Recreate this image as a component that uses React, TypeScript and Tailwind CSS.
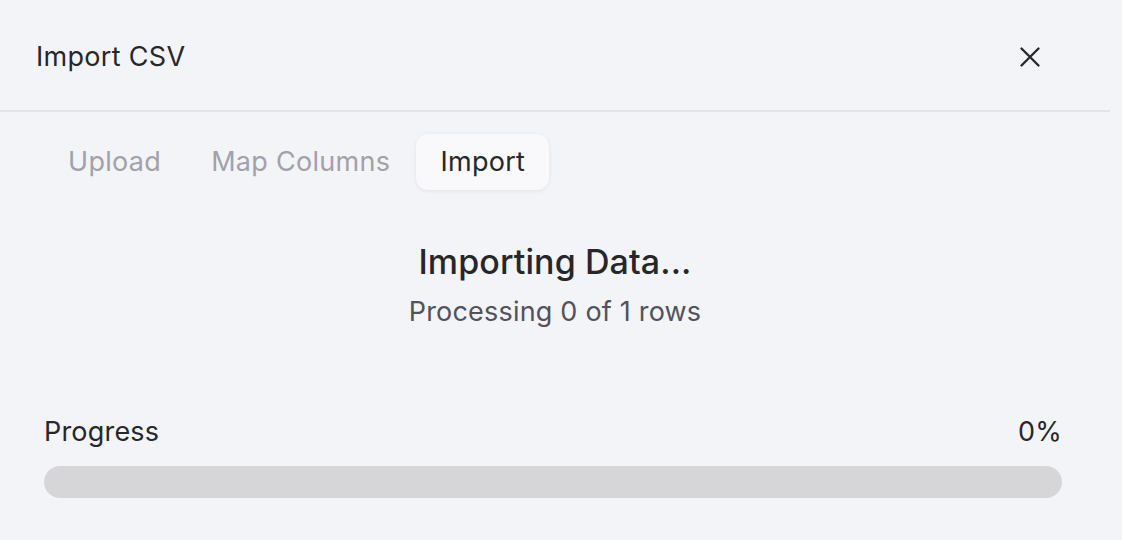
import React from 'react';

const tabs = ['Upload', 'Map Columns', 'Import'];

function CloseIcon() {
  return (
    <svg width="20" height="20" viewBox="0 0 20 20" fill="none" stroke="currentColor" strokeWidth="2.3" strokeLinecap="round">
      <path d="M1.5 1.5L18.5 18.5M18.5 1.5L1.5 18.5" />
    </svg>
  );
}

export default function App() {
  const processed = 0;
  const total = 1;
  const percent = total ? Math.round((processed / total) * 100) : 0;

  return (
    <div
      className="w-[1122px] h-[540px] bg-[#f3f4f8] text-[#27272a] overflow-hidden"
      style={{ fontFamily: 'Inter, "Noto Sans", sans-serif' }}
    >
      <div className="w-[1110px]">
        {/* Header */}
        <div className="h-[112px] flex items-center justify-between pt-[4px] pl-[36px] pr-[70px] border-b-2 border-[#e4e4e8]">
          <h1 className="text-[27px] font-normal tracking-[0.3px]">Import CSV</h1>
          <button className="text-[#27272a] flex items-center justify-center">
            <CloseIcon />
          </button>
        </div>

        {/* Tabs */}
        <div className="flex items-center gap-[2px] pl-[44px] mt-[22px]">
          {tabs.map((t) => {
            const active = t === 'Import';
            return (
              <div
                key={t}
                className={`h-[56px] px-[24px] flex items-center rounded-[12px] text-[27px] tracking-[0.3px] ${
                  active
                    ? 'bg-[#f9f9fb] text-[#27272a] shadow-[0_1px_4px_rgba(0,0,0,0.08)]'
                    : 'text-[#a1a1aa]'
                }`}
              >
                {t}
              </div>
            );
          })}
        </div>

        {/* Status */}
        <div className="flex flex-col items-center mt-[50px]">
          <h2 className="text-[34px] font-medium leading-[44px] tracking-[0.1px]">Importing Data...</h2>
          <p className="text-[27px] text-[#52525b] leading-[34px] mt-[11px] tracking-[0.2px]">
            Processing {processed} of {total} rows
          </p>
        </div>

        {/* Progress */}
        <div className="pl-[44px] pr-[48px] mt-[86px]">
          <div className="flex items-center justify-between text-[27px] leading-[34px] tracking-[0.2px]">
            <span>Progress</span>
            <span>{percent}%</span>
          </div>
          <div className="mt-[17px] h-[32px] rounded-full bg-[#d6d6d9] overflow-hidden">
            <div className="h-full bg-[#27272a] rounded-full" style={{ width: `${percent}%` }} />
          </div>
        </div>
      </div>
    </div>
  );
}
